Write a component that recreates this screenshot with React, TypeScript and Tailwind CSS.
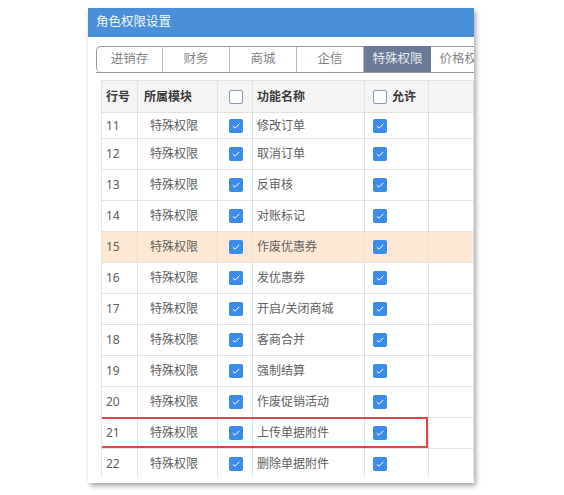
import React from "react";

const font = { fontFamily: '"Noto Sans", "Noto Sans CJK SC", sans-serif' };

const tabs = ["进销存", "财务", "商城", "企信", "特殊权限", "价格权限"];

const rows = [
  { no: 11, name: "修改订单" },
  { no: 12, name: "取消订单" },
  { no: 13, name: "反审核" },
  { no: 14, name: "对账标记" },
  { no: 15, name: "作废优惠券", hl: true },
  { no: 16, name: "发优惠券" },
  { no: 17, name: "开启/关闭商城" },
  { no: 18, name: "客商合并" },
  { no: 19, name: "强制结算" },
  { no: 20, name: "作废促销活动" },
  { no: 21, name: "上传单据附件", mark: true },
  { no: 22, name: "删除单据附件" },
];

function Check({ on }: { on: boolean }) {
  if (!on)
    return <span className="block w-[14px] h-[14px] rounded-[2px] border border-[#8c9bb5] bg-white" />;
  return (
    <span className="flex items-center justify-center w-[14px] h-[14px] rounded-[2px] bg-[#3a8bea]">
      <svg width="10" height="10" viewBox="0 0 10 10">
        <path d="M1.8 5.2 L4 7.2 L8.3 2.8" stroke="white" strokeWidth="1" fill="none" />
      </svg>
    </span>
  );
}

export default function App() {
  return (
    <div className="w-[564px] h-[495px] bg-white pl-[88px] pt-[8px]" style={font}>
      <div className="w-[386px] h-[475px] bg-white overflow-hidden flex flex-col shadow-[2px_3px_5px_rgba(0,0,0,0.35)]">
        {/* title bar */}
        <div className="h-[29px] shrink-0 bg-[#4a8fd8] text-[#f4f8fd] text-[12.5px] flex items-center pl-[8px]">
          角色权限设置
        </div>

        {/* tabs */}
        <div className="mt-[9px] ml-[8px] h-[27px] shrink-0 flex border-b border-[#9a9a9a]">
          {tabs.map((t, i) => (
            <div
              key={t}
              className={
                "w-[67px] shrink-0 flex items-center justify-center text-[12.5px] border-t border-[#9a9a9a] " +
                (i === 0 ? "border-l rounded-tl-[5px] rounded-bl-[5px] " : "") +
                (i < 4 ? "border-r border-r-[#b8b8b8] " : "") +
                (i === 4 ? "bg-[#6b7a96] text-[#e6eaf2] border-t-[#6b7a96]" : "text-[#858585] bg-white")
              }
            >
              {t}
            </div>
          ))}
        </div>

        {/* table */}
        <div className="mt-[7px] ml-[13px] h-[397px] shrink-0 overflow-hidden border-l border-[#e2e2e2]">
          <div className="flex h-[33px] bg-[#f4f4f4] border-y border-[#e2e2e2] text-[12px] font-semibold text-[#3a3a3a]">
            <div className="w-[36px] shrink-0 flex items-center pl-[4px] border-r border-[#e2e2e2]">行号</div>
            <div className="w-[80px] shrink-0 flex items-center pl-[6px] border-r border-[#e2e2e2]">所属模块</div>
            <div className="w-[35px] shrink-0 flex items-center pl-[11px] border-r border-[#e2e2e2]">
              <Check on={false} />
            </div>
            <div className="w-[112px] shrink-0 flex items-center pl-[4px] border-r border-[#e2e2e2]">功能名称</div>
            <div className="w-[64px] shrink-0 flex items-center gap-[5px] pl-[8px] border-r border-[#e2e2e2]">
              <Check on={false} />
              <span>允许</span>
            </div>
            <div className="flex-1 border-r border-[#e2e2e2]" />
          </div>

          {rows.map((r, i) => (
            <div
              key={r.no}
              className={
                "relative flex border-b border-[#e2e2e2] text-[12px] text-[#606060] " +
                (i === 0 ? "h-[26px] " : "h-[31px] ") +
                (r.hl ? "bg-[#fde9d3]" : "bg-white")
              }
            >
              <div className="w-[36px] shrink-0 flex items-center pl-[4px] border-r border-[#e2e2e2]">{r.no}</div>
              <div className="w-[80px] shrink-0 flex items-center pl-[12px] border-r border-[#e2e2e2]">特殊权限</div>
              <div className="w-[35px] shrink-0 flex items-center pl-[11px] border-r border-[#e2e2e2]">
                <Check on />
              </div>
              <div className="w-[112px] shrink-0 flex items-center pl-[4px] border-r border-[#e2e2e2]">{r.name}</div>
              <div className="w-[64px] shrink-0 flex items-center pl-[8px] border-r border-[#e2e2e2]">
                <Check on />
              </div>
              <div className="flex-1 border-r border-[#e2e2e2]" />
              {r.mark && (
                <div className="absolute left-[-3px] top-[-1px] w-[329px] h-[31px] border-2 border-[#e0474c]" />
              )}
            </div>
          ))}
        </div>
      </div>
    </div>
  );
}
